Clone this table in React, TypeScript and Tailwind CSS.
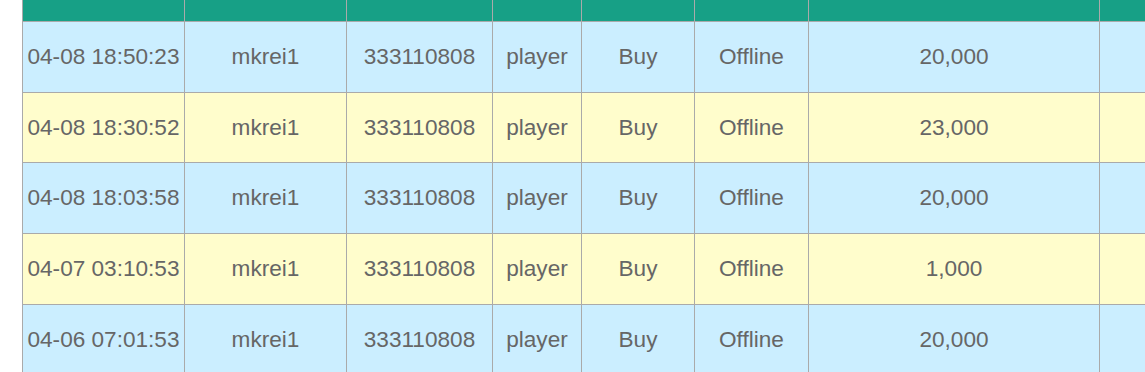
const rows = [
  { time: '04-08 18:50:23', amount: '20,000', h: 'h-[71px]' },
  { time: '04-08 18:30:52', amount: '23,000', h: 'h-[70px]' },
  { time: '04-08 18:03:58', amount: '20,000', h: 'h-[71px]' },
  { time: '04-07 03:10:53', amount: '1,000', h: 'h-[71px]' },
  { time: '04-06 07:01:53', amount: '20,000', h: 'h-[71px]' },
]

const cols = 'grid grid-cols-[163px_162px_146px_89px_113px_114px_291px_200px]'
const cell = 'flex items-center justify-center border-r border-b border-[#aaaaaa]'

const App = () => {
  return (
    <div
      className="w-[1145px] h-[372px] overflow-hidden bg-white pl-[22px] text-[22.6px] text-[#666666]"
      style={{ fontFamily: '"Liberation Sans", Arial, sans-serif' }}
    >
      <div className={`${cols} h-[22px] bg-[#17a086]`}>
        {Array.from({ length: 8 }).map((_, i) => (
          <div key={i} className={`${cell} ${i === 0 ? 'border-l' : ''}`} />
        ))}
      </div>
      {rows.map((r, idx) => (
        <div
          key={idx}
          className={`${cols} ${r.h} ${idx % 2 === 0 ? 'bg-[#cbeeff]' : 'bg-[#fffdcc]'}`}
        >
          <div className={`${cell} border-l whitespace-nowrap`}>{r.time}</div>
          <div className={cell}>mkrei1</div>
          <div className={cell}>333110808</div>
          <div className={cell}>player</div>
          <div className={cell}>Buy</div>
          <div className={cell}>Offline</div>
          <div className={cell}>{r.amount}</div>
          <div className={cell} />
        </div>
      ))}
    </div>
  )
}

export default App
